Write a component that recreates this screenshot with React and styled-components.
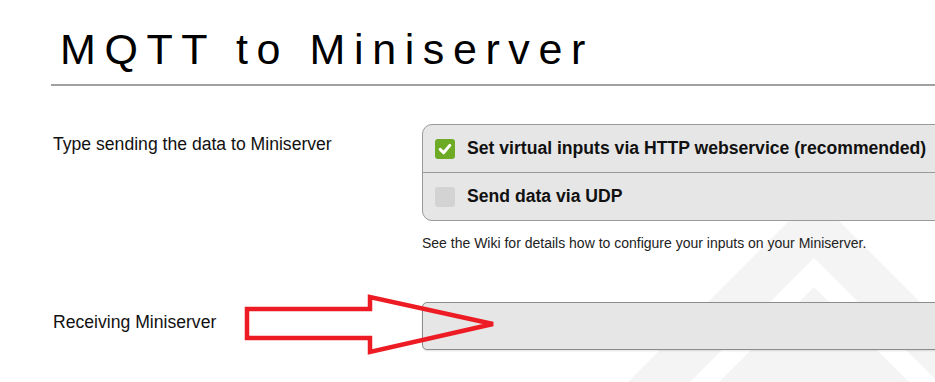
import React from "react";
import styled, { createGlobalStyle } from "styled-components";

const GlobalStyle = createGlobalStyle`
  html, body { margin: 0; padding: 0; background: #ffffff; }
  body { font-family: "Liberation Sans", Arial, sans-serif; color: #111; }
`;

const Page = styled.div`
  position: relative;
  width: 935px;
  height: 382px;
  overflow: hidden;
  box-sizing: border-box;
  padding-left: 51px;
  background: #fff;
`;

const Watermark = styled.svg`
  position: absolute;
  left: 0;
  top: 0;
  z-index: 0;
  pointer-events: none;
`;

const Overlay = styled.svg`
  position: absolute;
  left: 0;
  top: 0;
  z-index: 2;
  pointer-events: none;
`;

const Content = styled.div`
  position: relative;
  z-index: 1;
`;

const Header = styled.header`
  padding-top: 28px;
  padding-bottom: 13px;
  border-bottom: 2px solid #a0a0a0;
`;

const Title = styled.h1`
  margin: 0 0 0 9px;
  font-size: 43px;
  line-height: 43px;
  font-weight: 400;
  letter-spacing: 0.2em;
  color: #000;
  white-space: nowrap;
`;

const FieldRow = styled.section`
  display: grid;
  grid-template-columns: 371px 600px;
  margin-top: ${(p) => p.$top}px;
`;

const Label = styled.div`
  padding-top: 10px;
  padding-left: 2px;
  font-size: 17.6px;
  line-height: 20px;
  color: #111;
  white-space: nowrap;
`;

const Field = styled.div`
  display: flex;
  flex-direction: column;
`;

const OptionGroup = styled.div`
  border: 1px solid #9a9a9a;
  border-radius: 10px;
  background: #e6e6e6;
  overflow: hidden;
`;

const Option = styled.div`
  display: flex;
  align-items: center;
  gap: 12px;
  height: 47px;
  padding-left: 12px;
  border-top: ${(p) => (p.$first ? "none" : "1px solid #9a9a9a")};
  font-size: 17.6px;
  font-weight: 700;
  color: #111;
  white-space: nowrap;
`;

const Box = styled.span`
  display: inline-flex;
  align-items: center;
  justify-content: center;
  width: 20px;
  height: 20px;
  border-radius: 3px;
  background: ${(p) => (p.$checked ? "#6dab27" : "#d3d3d3")};
  flex: none;
`;

const Help = styled.p`
  margin: 14px 0 0;
  font-size: 14px;
  line-height: 16px;
  color: #222;
  white-space: nowrap;
`;

const Select = styled.div`
  height: 46px;
  border: 1px solid #8c8c8c;
  border-radius: 5px;
  background: #e6e6e6;
  box-shadow: 0 1px 2px rgba(0, 0, 0, 0.12);
`;

function Check() {
  return (
    <svg width="14" height="14" viewBox="0 0 14 14">
      <path d="M2.2 7.4 L5.6 10.8 L11.8 3.4" fill="none" stroke="#fff" strokeWidth="3" strokeLinecap="round" strokeLinejoin="round" />
    </svg>
  );
}

export default function App() {
  return (
    <>
      <GlobalStyle />
      <Page>
        <Watermark width="935" height="382" viewBox="0 0 935 382">
          <polygon points="814,196 1014,396 614,396" fill="#f4f4f4" />
          <polygon points="814,258 952,396 676,396" fill="#ffffff" />
          <polygon points="814,287 923,396 705,396" fill="#f4f4f4" />
        </Watermark>
        <Content>
          <Header>
            <Title>MQTT to Miniserver</Title>
          </Header>
          <FieldRow $top={38}>
            <Label>Type sending the data to Miniserver</Label>
            <Field>
              <OptionGroup>
                <Option $first>
                  <Box $checked>
                    <Check />
                  </Box>
                  Set virtual inputs via HTTP webservice (recommended)
                </Option>
                <Option>
                  <Box />
                  Send data via UDP
                </Option>
              </OptionGroup>
              <Help>See the Wiki for details how to configure your inputs on your Miniserver.</Help>
            </Field>
          </FieldRow>
          <FieldRow $top={51}>
            <Label>Receiving Miniserver</Label>
            <Field>
              <Select />
            </Field>
          </FieldRow>
        </Content>
        <Overlay width="935" height="382" viewBox="0 0 935 382">
          <polygon
            points="247,309 370,309 370,297 493,324 370,352 370,338 247,338"
            fill="none"
            stroke="#ed1c24"
            strokeWidth="4.5"
            strokeLinejoin="miter"
            strokeMiterlimit="3"
          />
        </Overlay>
      </Page>
    </>
  );
}
